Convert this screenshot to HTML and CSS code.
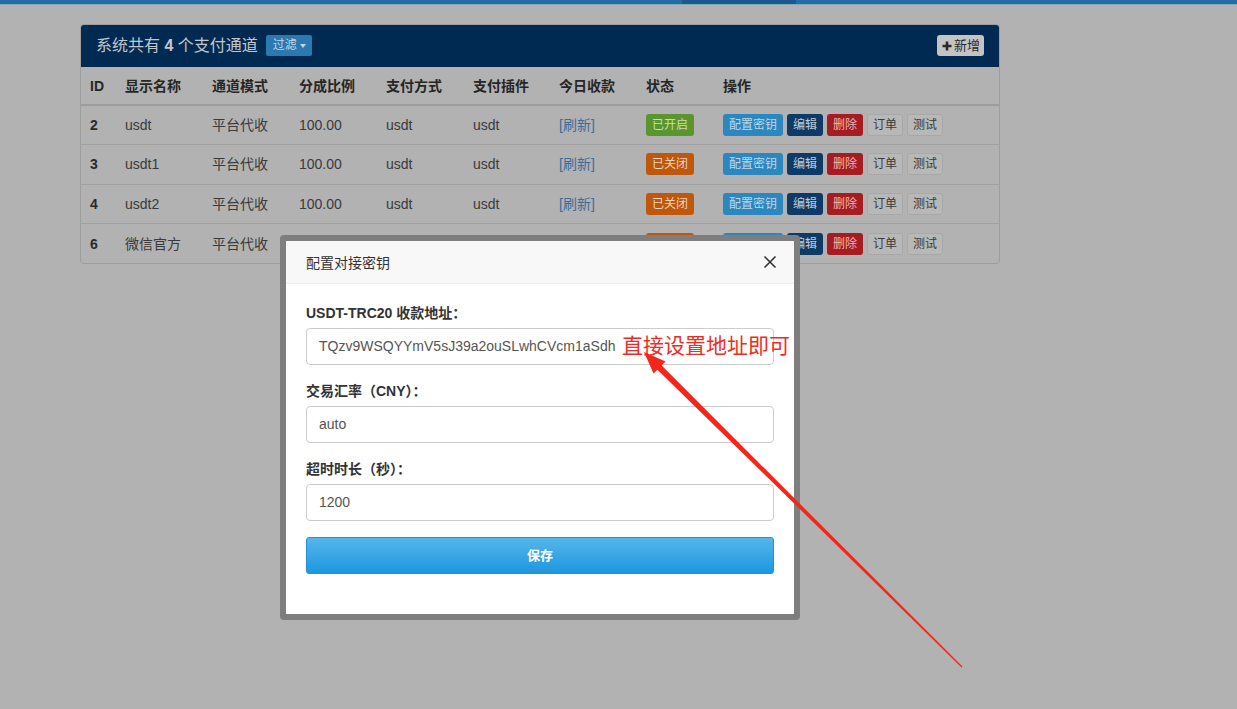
FILE: index.html
```html
<!DOCTYPE html>
<html lang="zh-CN">
<head>
<meta charset="utf-8">
<title>支付通道</title>
<link rel="stylesheet" href="styles.css">
</head>
<body>
<div class="topbar"><div class="topbar-active"></div></div>
<div class="container">
  <div class="panel">
    <div class="panel-heading">
      <span class="panel-title">系统共有 <b>4</b> 个支付通道</span>
      <span class="btn-filter">过滤<span class="caret"></span></span>
      <span class="btn-add"><svg class="plus" viewBox="0 0 10 10" width="10" height="10"><path d="M5 0.5V9.5M0.5 5H9.5" stroke="#2a2a2a" stroke-width="2.6"/></svg>新增</span>
    </div>
    <table class="table">
      <thead>
        <tr>
          <th class="c-id">ID</th><th class="c-w">显示名称</th><th class="c-w">通道模式</th><th class="c-w">分成比例</th><th class="c-w">支付方式</th><th class="c-p">支付插件</th><th class="c-w">今日收款</th><th class="c-s">状态</th><th class="c-op">操作</th>
        </tr>
      </thead>
      <tbody>
        <tr>
          <td class="bold">2</td><td>usdt</td><td>平台代收</td><td>100.00</td><td>usdt</td><td>usdt</td><td><span class="link">[刷新]</span></td>
          <td><span class="lbl lbl-on">已开启</span></td>
          <td><div class="ops"><span class="b b-key">配置密钥</span><span class="b b-edit">编辑</span><span class="b b-del">删除</span><span class="b b-def">订单</span><span class="b b-def">测试</span></div></td>
        </tr>
        <tr>
          <td class="bold">3</td><td>usdt1</td><td>平台代收</td><td>100.00</td><td>usdt</td><td>usdt</td><td><span class="link">[刷新]</span></td>
          <td><span class="lbl lbl-off">已关闭</span></td>
          <td><div class="ops"><span class="b b-key">配置密钥</span><span class="b b-edit">编辑</span><span class="b b-del">删除</span><span class="b b-def">订单</span><span class="b b-def">测试</span></div></td>
        </tr>
        <tr>
          <td class="bold">4</td><td>usdt2</td><td>平台代收</td><td>100.00</td><td>usdt</td><td>usdt</td><td><span class="link">[刷新]</span></td>
          <td><span class="lbl lbl-off">已关闭</span></td>
          <td><div class="ops"><span class="b b-key">配置密钥</span><span class="b b-edit">编辑</span><span class="b b-del">删除</span><span class="b b-def">订单</span><span class="b b-def">测试</span></div></td>
        </tr>
        <tr>
          <td class="bold">6</td><td>微信官方</td><td>平台代收</td><td>100.00</td><td>微信支付</td><td>wxpay</td><td><span class="link">[刷新]</span></td>
          <td><span class="lbl lbl-off">已关闭</span></td>
          <td><div class="ops"><span class="b b-key">配置密钥</span><span class="b b-edit">编辑</span><span class="b b-del">删除</span><span class="b b-def">订单</span><span class="b b-def">测试</span></div></td>
        </tr>
      </tbody>
    </table>
  </div>
</div>

<div class="modal">
  <div class="modal-inner">
    <div class="modal-header">
      <span class="modal-title">配置对接密钥</span>
      <svg class="close" viewBox="0 0 14 14" width="14" height="14"><path d="M1.5 1.5L12.5 12.5M12.5 1.5L1.5 12.5" stroke="#333" stroke-width="1.6"/></svg>
    </div>
    <div class="modal-body">
      <div class="group">
        <div class="label">USDT-TRC20 收款地址：</div>
        <div class="input">TQzv9WSQYYmV5sJ39a2ouSLwhCVcm1aSdh</div>
      </div>
      <div class="group">
        <div class="label">交易汇率（CNY）：</div>
        <div class="input">auto</div>
      </div>
      <div class="group">
        <div class="label">超时时长（秒）：</div>
        <div class="input">1200</div>
      </div>
      <div class="btn-save">保存</div>
    </div>
  </div>
</div>

<div class="note">直接设置地址即可</div>
<svg class="arrow" viewBox="0 0 1237 709" width="1237" height="709">
  <polygon points="962.45,666.55 661.68,365.44 665.57,361.55 644,352 653.55,373.57 657.44,369.68 961.55,667.45" fill="#f3261c"/>
</svg>
</body>
</html>
```

FILE: styles.css
```css
* { box-sizing: border-box; }
html, body { margin: 0; padding: 0; }
body {
  width: 1237px;
  height: 709px;
  overflow: hidden;
  background: #b2b2b2;
  font-family: "Liberation Sans", "Noto Sans CJK SC", sans-serif;
  font-size: 14px;
  color: #3a3a3a;
  position: relative;
}

.topbar {
  height: 5px;
  background: #1f6ea4;
  border-bottom: 1px solid #86a7bb;
  display: flex;
}
.topbar-active {
  margin-left: 682px;
  width: 114px;
  height: 4px;
  background: #195a8a;
}

.container {
  padding: 19px 0 0 80px;
}
.panel {
  width: 920px;
  border: 1px solid #9d9d9d;
  border-radius: 4px;
  overflow: hidden;
}
.panel-heading {
  height: 43px;
  background: #002a52;
  margin: -1px -1px 0 -1px;
  padding: 0 16px 0 16px;
  display: flex;
  align-items: center;
}
.panel-title {
  font-size: 16px;
  color: #c3c7cc;
  line-height: 22px;
}
.panel-title b { font-weight: bold; }
.btn-filter {
  margin-left: 8px;
  height: 21px;
  padding: 0 6px 0 7px;
  background: #2a7ab1;
  color: #c5d6e3;
  font-size: 12px;
  line-height: 21px;
  border-radius: 2px;
  display: inline-flex;
  align-items: center;
}
.caret {
  display: inline-block;
  margin-left: 3px;
  width: 0;
  height: 0;
  border-left: 3px solid transparent;
  border-right: 3px solid transparent;
  border-top: 4px solid #c5d6e3;
}
.btn-add {
  margin-left: auto;
  height: 21px;
  padding: 0 4px 0 5px;
  background: #c4c4c4;
  color: #2a2a2a;
  font-size: 13px;
  line-height: 21px;
  border-radius: 3px;
  display: inline-flex;
  align-items: center;
}
.plus { margin-right: 2px; }

.table {
  width: 918px;
  border-collapse: collapse;
  table-layout: fixed;
}
.table th, .table td {
  text-align: left;
  line-height: 22px;
  vertical-align: middle;
  white-space: nowrap;
  overflow: hidden;
}
.table th {
  font-weight: bold;
  color: #262626;
  height: 38px;
  padding: 0 0 0 9px;
  border-bottom: 2px solid #9c9c9c;
}
.table td {
  border-top: 1px solid #a0a0a0;
  padding: 0 0 0 9px;
  height: 39.5px;
}
.table tbody tr:first-child td { border-top: 0; }
.c-id { width: 35px; }
.c-w { width: 87px; }
.c-p { width: 86px; }
.c-s { width: 77px; }
.c-op { width: 285px; }
.bold { font-weight: bold; color: #2a2a2a; }
.link { color: #3e6d98; }

.lbl {
  display: block;
  width: max-content;
  height: 22px;
  line-height: 22px;
  padding: 0 6px;
  font-size: 12px;
  border-radius: 3px;
}
.lbl-on { background: #5a962d; color: #c9dbbf; }
.lbl-off { background: #bf570c; color: #eed3bf; }

.ops { display: flex; gap: 4px; height: 22px; }
.b {
  display: block;
  height: 22px;
  line-height: 22px;
  padding: 0 6px;
  font-size: 12px;
  border-radius: 3px;
}
.b-key { background: #2b87be; color: #bcd7e8; }
.b-edit { background: #0e3a66; color: #c2cbd4; }
.b-del { background: #a51c22; color: #e6b9ba; }
.b-def {
  background: #b8b8b8;
  color: #3a3a3a;
  border: 1px solid #a8a8a8;
  line-height: 20px;
  padding: 0 5px;
}

.modal {
  position: absolute;
  left: 280px;
  top: 235px;
  width: 520px;
  height: 385px;
  border: 6px solid #7e7e7e;
  border-radius: 4px;
  background: #fff;
}
.modal-inner { height: 100%; }
.modal-header {
  height: 43px;
  background: #f8f8f8;
  border-bottom: 1px solid #eeeeee;
  padding: 0 17px 0 20px;
  display: flex;
  align-items: center;
  justify-content: space-between;
}
.modal-title { font-size: 14px; color: #333; }
.modal-body { padding: 19px 20px 0 20px; }
.group { margin-bottom: 16px; }
.label {
  font-size: 14px;
  font-weight: bold;
  color: #333;
  line-height: 20px;
  margin-bottom: 5px;
}
.input {
  height: 37px;
  border: 1px solid #cccccc;
  border-radius: 4px;
  padding: 0 12px;
  line-height: 35px;
  font-size: 14px;
  color: #555;
}
.btn-save {
  height: 37px;
  border: 1px solid #2392d4;
  border-radius: 3px;
  background: linear-gradient(to bottom, #55b6ec, #1e97de);
  color: #fff;
  font-size: 13px;
  font-weight: bold;
  line-height: 35px;
  text-align: center;
}

.note {
  position: absolute;
  left: 622px;
  top: 330px;
  font-family: "Noto Sans CJK SC", sans-serif;
  font-size: 21px;
  line-height: 28px;
  color: #f42a22;
  white-space: nowrap;
}
.arrow {
  position: absolute;
  left: 0;
  top: 0;
  pointer-events: none;
}
```
